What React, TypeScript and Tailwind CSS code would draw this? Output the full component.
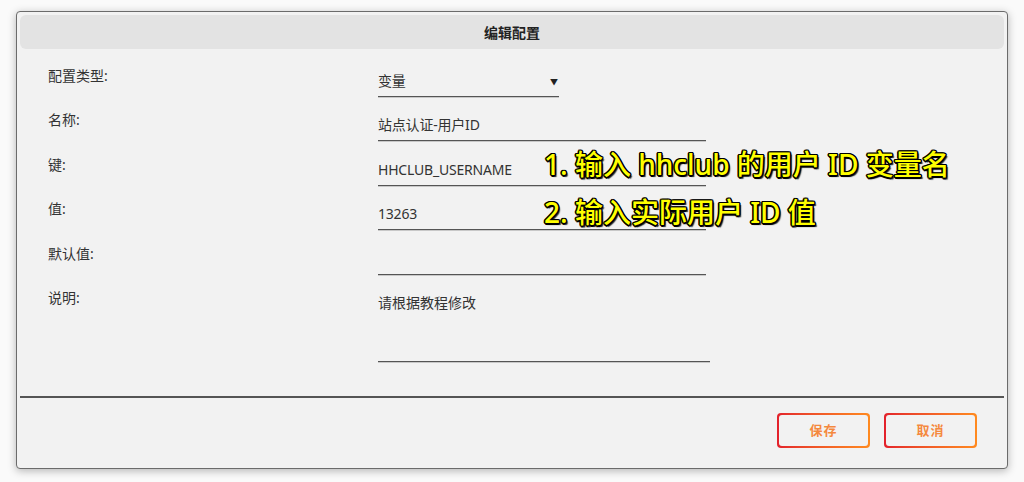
import React from "react";

const FONT = { fontFamily: '"Noto Sans", "Noto Sans CJK SC", sans-serif' };

const FIELDS = [
  { label: "配置类型:", value: "变量", select: true },
  { label: "名称:", value: "站点认证-用户ID" },
  { label: "键:", value: "HHCLUB_USERNAME" },
  { label: "值:", value: "13263" },
  { label: "默认值:", value: "" },
];

const outline =
  "[text-shadow:1.5px_0_0_#000,-1.5px_0_0_#000,0_1.5px_0_#000,0_-1.5px_0_#000,1px_1px_0_#000,-1px_-1px_0_#000,1px_-1px_0_#000,-1px_1px_0_#000,2px_2px_1px_#222]";

function Field({ value, select, width }: { value: string; select?: boolean; width: string }) {
  return (
    <div className={`${width} h-[31px] border-b border-[#555] shadow-[0_1px_0_#c8c8c8] flex items-start justify-between`}>
      <span className="pt-[5px] leading-[20px] text-[14px] text-[#333] tracking-[-0.2px]">{value}</span>
      {select && <span className="pt-[6px] pr-[1px] text-[8px] leading-[20px] text-[#222]">▼</span>}
    </div>
  );
}

function GradientButton({ children }: { children: React.ReactNode }) {
  return (
    <div className="p-[2px] rounded-[4px] bg-linear-to-r from-[#e3202b] to-[#ff8a1f]">
      <button className="w-[89px] h-[31px] rounded-[3px] bg-[#f2f2f2] text-[13px] font-bold text-[#f5893e] tracking-[1px]">
        {children}
      </button>
    </div>
  );
}

export default function App() {
  return (
    <div className="w-[1024px] h-[482px] bg-[#fafafa] pt-[11px]" style={FONT}>
      <div className="relative ml-[16px] w-[992px] h-[458px] border border-[#6b6b6b] rounded-[4px] bg-[#f2f2f2] shadow-[0_2px_8px_rgba(0,0,0,0.28)]">
        {/* header */}
        <div className="mt-[3px] mx-[3px] h-[34px] rounded-[6px] bg-[#e3e3e3] flex items-center justify-center">
          <span className="text-[14px] font-bold text-[#222]">编辑配置</span>
        </div>

        {/* form */}
        <div className="pt-[17px] pl-[31px]">
          {FIELDS.map((f) => (
            <div key={f.label} className="h-[44.4px] flex items-start">
              <div className="w-[330px] text-[14px] leading-[20px] text-[#333]">{f.label}</div>
              <Field value={f.value} select={f.select} width={f.select ? "w-[181px]" : "w-[328px]"} />
            </div>
          ))}
          <div className="h-[74px] flex items-start">
            <div className="w-[330px] text-[14px] leading-[20px] text-[#333]">说明:</div>
            <div className="w-[332px] h-[74px] border-b border-[#555] shadow-[0_1px_0_#c8c8c8]">
              <span className="block pt-[5px] leading-[20px] text-[14px] text-[#333]">请根据教程修改</span>
            </div>
          </div>
        </div>

        <div className="mt-[34px] mx-[3px] h-[2px] bg-[#555]" />

        <div className="pt-[15px] pr-[30px] flex justify-end gap-[14px]">
          <GradientButton>保存</GradientButton>
          <GradientButton>取消</GradientButton>
        </div>

        {/* annotations */}
        <div className={`absolute left-[527px] top-[134px] text-[28px] font-medium leading-[36px] text-[#ffff00] ${outline}`}>
          1. 输入 hhclub 的用户 ID 变量名
        </div>
        <div className={`absolute left-[527px] top-[182px] text-[28px] font-medium leading-[36px] text-[#ffff00] ${outline}`}>
          2. 输入实际用户 ID 值
        </div>
      </div>
    </div>
  );
}
